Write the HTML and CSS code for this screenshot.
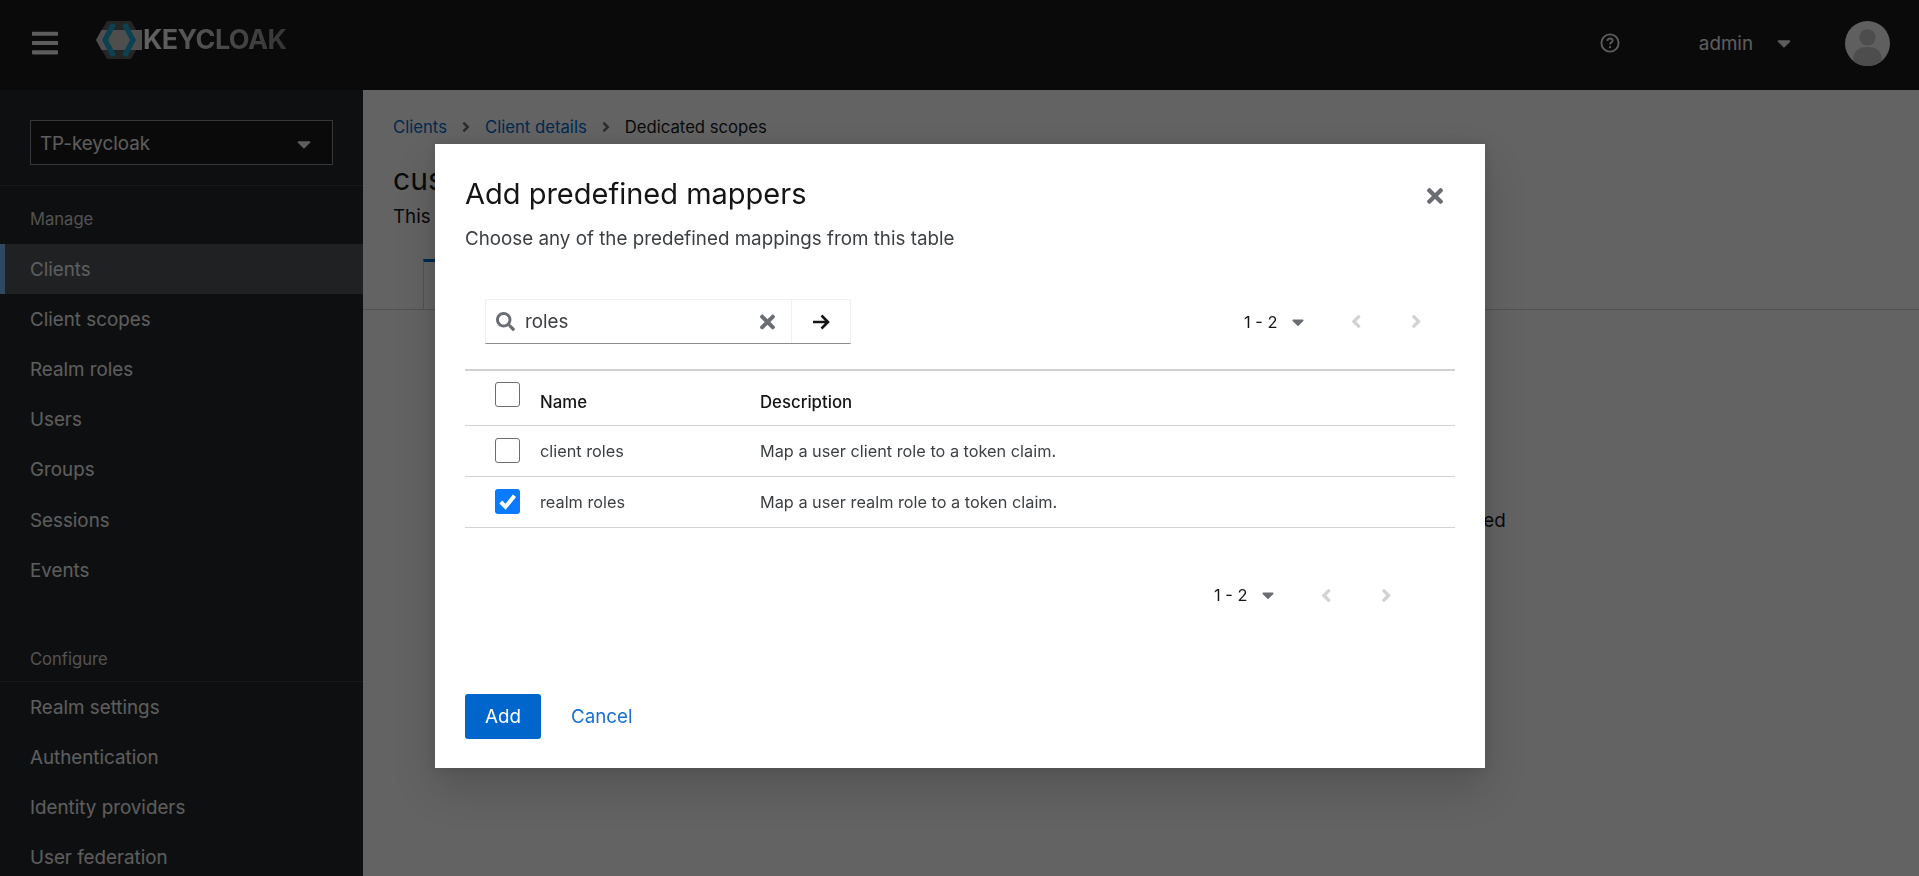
FILE: index.html
```html
<!DOCTYPE html>
<html lang="en">
<head>
    <meta charset="UTF-8">
    <meta name="viewport" content="width=device-width, initial-scale=1.0">
    <title>Keycloak Administration</title>
    <link rel="stylesheet" href="styles.css">
</head>
<body>
    <header class="topbar">
        <button class="menu-btn" aria-label="Menu">
            <svg class="menu-icon" viewBox="0 0 448 512"><path d="M16 132h416c8.837 0 16-7.163 16-16V76c0-8.837-7.163-16-16-16H16C7.163 60 0 67.163 0 76v40c0 8.837 7.163 16 16 16zm0 160h416c8.837 0 16-7.163 16-16v-40c0-8.837-7.163-16-16-16H16c-8.837 0-16 7.163-16 16v40c0 8.837 7.163 16 16 16zm0 160h416c8.837 0 16-7.163 16-16v-40c0-8.837-7.163-16-16-16H16c-8.837 0-16 7.163-16 16v40c0 8.837 7.163 16 16 16z"/></svg>
        </button>
        <div class="logo">
            <svg class="logo-mark" viewBox="0 0 46 38">
                <path d="M11 0H35L46 19 35 38H11L0 19Z" fill="#5c5c5c"/>
                <path d="M5.5 9H46V29H5.5L0 19Z" fill="#c8c8c8"/>
                <path d="M15 2 L20 4 L12 19 L20 34 L15 36 L6 19Z" fill="#1ba6cf"/>
                <path d="M31 2 L26 4 L34 19 L26 34 L31 36 L40 19Z" fill="#1ba6cf"/>
            </svg>
            <span class="logo-text">KEYCLOAK</span>
        </div>
        <div class="topbar-right">
            <svg class="help-icon" viewBox="0 0 20 20"><circle cx="10" cy="10" r="8.6" fill="none" stroke="#f0f0f0" stroke-width="1.9"/><path d="M7.4 8c0-1.6 1.1-2.5 2.6-2.5s2.6.9 2.6 2.2c0 1.9-2.6 1.9-2.6 3.8" fill="none" stroke="#f0f0f0" stroke-width="1.8"/><circle cx="10" cy="14.2" r="1.1" fill="#f0f0f0"/></svg>
            <div class="user-menu">
                <span>admin</span>
                <svg class="caret caret-user" viewBox="0 0 320 512"><path d="M31.3 192h257.3c17.8 0 26.7 21.5 14.1 34.1L174.1 354.8c-7.8 7.8-20.5 7.8-28.3 0L17.2 226.1C4.6 213.5 13.5 192 31.3 192z"/></svg>
            </div>
            <svg class="avatar" viewBox="0 0 44 44">
                <circle cx="22" cy="22" r="22" fill="#f5f5f5"/>
                <circle cx="22" cy="16" r="8" fill="#c4c4c4"/>
                <path d="M8 39c0-11 6-13.500 14-13.500S36 28 36 39c-4 3.500-9 5-14 5S12 42.500 8 39z" fill="#c4c4c4"/>
            </svg>
        </div>
    </header>

    <div class="layout">
        <nav class="sidebar">
            <div class="realm-box">
                <div class="realm-select">
                    <span>TP-keycloak</span>
                    <svg class="caret" viewBox="0 0 320 512"><path d="M31.3 192h257.3c17.8 0 26.7 21.5 14.1 34.1L174.1 354.8c-7.8 7.8-20.5 7.8-28.3 0L17.2 226.1C4.6 213.5 13.5 192 31.3 192z"/></svg>
                </div>
            </div>
            <div class="nav-title">Manage</div>
            <a class="nav-item active">Clients</a>
            <a class="nav-item">Client scopes</a>
            <a class="nav-item">Realm roles</a>
            <a class="nav-item">Users</a>
            <a class="nav-item">Groups</a>
            <a class="nav-item">Sessions</a>
            <a class="nav-item">Events</a>
            <div class="nav-title nav-title-line">Configure</div>
            <a class="nav-item">Realm settings</a>
            <a class="nav-item">Authentication</a>
            <a class="nav-item">Identity providers</a>
            <a class="nav-item">User federation</a>
        </nav>

        <main class="content">
            <div class="page-head">
                <div class="breadcrumb">
                    <a>Clients</a>
                    <svg class="crumb-sep" viewBox="0 0 256 512"><path d="M224.300 273l-136 136c-9.400 9.400-24.600 9.400-33.900 0l-22.600-22.600c-9.400-9.400-9.400-24.600 0-33.900l96.400-96.400-96.400-96.400c-9.400-9.400-9.400-24.600 0-33.900L54.300 103c9.400-9.400 24.600-9.400 33.900 0l136 136c9.500 9.400 9.500 24.600.1 34z"/></svg>
                    <a>Client details</a>
                    <svg class="crumb-sep" viewBox="0 0 256 512"><path d="M224.300 273l-136 136c-9.400 9.400-24.600 9.400-33.900 0l-22.600-22.600c-9.400-9.400-9.400-24.600 0-33.900l96.400-96.400-96.400-96.400c-9.400-9.400-9.400-24.600 0-33.900L54.300 103c9.400-9.400 24.600-9.400 33.900 0l136 136c9.500 9.400 9.500 24.600.1 34z"/></svg>
                    <span>Dedicated scopes</span>
                </div>
                <h1 class="page-title">cus</h1>
                <p class="page-sub">This</p>
            </div>
            <div class="tabs">
                <div class="tab tab-current">&nbsp;</div>
            </div>
            <div class="empty-state">
                <p>If you want to add mappers, please click the button below to add some predefined</p>
            </div>
        </main>
    </div>

    <!-- Modal sits over the whole page -->
    <div class="backdrop">
        <div class="modal">
            <div class="modal-head">
                <div>
                    <h2 class="modal-title">Add predefined mappers</h2>
                    <p class="modal-desc">Choose any of the predefined mappings from this table</p>
                </div>
                <svg class="close-icon" viewBox="0 0 352 512"><path d="M242.72 256l100.07-100.07c12.28-12.28 12.28-32.19 0-44.48l-22.24-22.24c-12.28-12.28-32.19-12.28-44.48 0L176 189.28 75.93 89.21c-12.28-12.28-32.19-12.28-44.48 0L9.21 111.45c-12.28 12.28-12.28 32.19 0 44.48L109.28 256 9.21 356.07c-12.28 12.28-12.28 32.19 0 44.48l22.24 22.24c12.28 12.28 32.2 12.28 44.48 0L176 322.72l100.07 100.07c12.28 12.28 32.2 12.28 44.48 0l22.24-22.24c12.28-12.28 12.28-32.19 0-44.48L242.72 256z"/></svg>
            </div>

            <div class="toolbar">
                <div class="search">
                    <div class="search-input">
                        <svg class="search-icon" viewBox="0 0 512 512"><path d="M505 442.7L405.3 343c-4.5-4.5-10.6-7-17-7H372c27.6-35.3 44-79.700 44-128C416 93.100 322.900 0 208 0S0 93.100 0 208s93.100 208 208 208c48.300 0 92.700-16.400 128-44v16.300c0 6.400 2.500 12.500 7 17l99.700 99.700c9.400 9.400 24.600 9.400 33.900 0l28.300-28.300c9.400-9.400 9.400-24.600.1-34zM208 336c-70.700 0-128-57.200-128-128 0-70.700 57.200-128 128-128 70.700 0 128 57.200 128 128 0 70.700-57.200 128-128 128z"/></svg>
                        <span class="search-text">roles</span>
                        <svg class="clear-icon" viewBox="0 0 352 512"><path d="M242.72 256l100.07-100.07c12.28-12.28 12.28-32.19 0-44.48l-22.24-22.24c-12.28-12.28-32.19-12.28-44.48 0L176 189.28 75.93 89.21c-12.28-12.28-32.19-12.28-44.48 0L9.21 111.45c-12.28 12.28-12.28 32.19 0 44.48L109.28 256 9.21 356.07c-12.28 12.28-12.28 32.19 0 44.48l22.24 22.24c12.28 12.28 32.2 12.28 44.48 0L176 322.72l100.07 100.07c12.28 12.28 32.2 12.28 44.48 0l22.24-22.24c12.28-12.28 12.28-32.19 0-44.48L242.72 256z"/></svg>
                    </div>
                    <div class="search-go">
                        <svg class="arrow-icon" viewBox="0 0 18 16"><path d="M1 8h15M9.500 1.500 16 8l-6.500 6.500" fill="none" stroke="#151515" stroke-width="2.600"/></svg>
                    </div>
                </div>
                <div class="pager">
                    <span class="pager-count">1 - 2</span>
                    <svg class="caret caret-dark" viewBox="0 0 320 512"><path d="M31.3 192h257.3c17.8 0 26.7 21.5 14.1 34.1L174.1 354.8c-7.8 7.8-20.5 7.8-28.3 0L17.2 226.1C4.6 213.5 13.5 192 31.3 192z"/></svg>
                    <svg class="angle angle-prev" viewBox="0 0 256 512"><path d="M31.7 239l136-136c9.4-9.4 24.6-9.4 33.9 0l22.6 22.6c9.4 9.4 9.4 24.6 0 33.9L127.900 256l96.400 96.400c9.400 9.400 9.400 24.600 0 33.900L201.700 409c-9.400 9.400-24.600 9.400-33.900 0l-136-136c-9.500-9.400-9.500-24.600-.1-34z"/></svg>
                    <svg class="angle angle-next" viewBox="0 0 256 512"><path d="M224.300 273l-136 136c-9.400 9.400-24.600 9.400-33.900 0l-22.600-22.600c-9.400-9.400-9.400-24.600 0-33.900l96.400-96.400-96.400-96.400c-9.400-9.400-9.400-24.600 0-33.900L54.300 103c9.400-9.400 24.600-9.400 33.900 0l136 136c9.500 9.400 9.500 24.600.1 34z"/></svg>
                </div>
            </div>

            <table class="mappers">
                <thead>
                    <tr>
                        <th class="col-check"><span class="check check-head"></span></th>
                        <th class="col-name">Name</th>
                        <th>Description</th>
                    </tr>
                </thead>
                <tbody>
                    <tr>
                        <td class="col-check"><span class="check"></span></td>
                        <td>client roles</td>
                        <td>Map a user client role to a token claim.</td>
                    </tr>
                    <tr>
                        <td class="col-check">
                            <span class="check check-on">
                                <svg viewBox="0 0 25 25"><path d="M5.800 13 10.500 17.800 19.500 6.800" fill="none" stroke="#fff" stroke-width="4"/></svg>
                            </span>
                        </td>
                        <td>realm roles</td>
                        <td>Map a user realm role to a token claim.</td>
                    </tr>
                </tbody>
            </table>

            <div class="pager pager-bottom">
                <span class="pager-count">1 - 2</span>
                <svg class="caret caret-dark" viewBox="0 0 320 512"><path d="M31.3 192h257.3c17.8 0 26.7 21.5 14.1 34.1L174.1 354.8c-7.8 7.8-20.5 7.8-28.3 0L17.2 226.1C4.6 213.5 13.5 192 31.3 192z"/></svg>
                <svg class="angle angle-prev" viewBox="0 0 256 512"><path d="M31.7 239l136-136c9.4-9.4 24.6-9.4 33.9 0l22.6 22.6c9.4 9.4 9.4 24.6 0 33.9L127.900 256l96.400 96.400c9.400 9.400 9.400 24.600 0 33.900L201.700 409c-9.400 9.400-24.600 9.400-33.900 0l-136-136c-9.500-9.400-9.500-24.600-.1-34z"/></svg>
                <svg class="angle angle-next" viewBox="0 0 256 512"><path d="M224.300 273l-136 136c-9.400 9.400-24.600 9.400-33.900 0l-22.600-22.600c-9.400-9.400-9.400-24.600 0-33.900l96.400-96.400-96.400-96.400c-9.400-9.400-9.400-24.600 0-33.900L54.300 103c9.400-9.400 24.600-9.400 33.900 0l136 136c9.500 9.400 9.500 24.600.1 34z"/></svg>
            </div>

            <div class="modal-foot">
                <button class="btn-add">Add</button>
                <a class="btn-cancel">Cancel</a>
            </div>
        </div>
    </div>
</body>
</html>
```

FILE: styles.css
```css
* {
    box-sizing: border-box;
}

body {
    margin: 0;
    height: 100vh;
    overflow: hidden;
    font-family: Inter, "Open Sans", sans-serif;
    font-size: 18.8px;
    color: #151515;
    background: #fff;
}

svg {
    display: block;
    flex: none;
}

/* Top bar */
.topbar {
    display: flex;
    align-items: center;
    height: 90px;
    padding: 0 29px 4px 32px;
    background: #151515;
    color: #f0f0f0;
}

.menu-btn {
    padding: 0;
    border: none;
    background: none;
}

.menu-icon {
    width: 26px;
    height: 30px;
    fill: #f0f0f0;
}

.logo {
    display: flex;
    align-items: center;
    margin-left: 38px;
    margin-bottom: 7px;
}

.logo-mark {
    width: 46px;
    height: 38px;
}

.logo-text {
    margin-left: 1px;
    font-size: 27px;
    font-weight: 700;
    letter-spacing: -0.6px;
    background: linear-gradient(90deg, #fff, #888);
    -webkit-background-clip: text;
    background-clip: text;
    color: transparent;
}

.topbar-right {
    display: flex;
    align-items: center;
    margin-left: auto;
}

.help-icon {
    width: 20px;
    height: 20px;
    margin-right: 79px;
}

.user-menu {
    display: flex;
    align-items: center;
}

.caret {
    width: 14px;
    height: 22px;
    fill: #f0f0f0;
}

.caret-user {
    margin-left: 24px;
}

.avatar {
    width: 45px;
    height: 45px;
    margin-left: 54px;
}

/* Sidebar and page behind the modal */
.layout {
    display: flex;
    height: calc(100vh - 90px);
}

.sidebar {
    flex: none;
    width: 363px;
    overflow: hidden;
    background: #212427;
    color: #f0f0f0;
}

.realm-box {
    padding: 30px 30px 20px;
    border-bottom: 1px solid #3c3f42;
}

.realm-select {
    display: flex;
    align-items: center;
    justify-content: space-between;
    height: 45px;
    padding: 2px 21px 0 9px;
    border: 1px solid #8a8d90;
    background: #151515;
}

.nav-title {
    display: flex;
    align-items: center;
    height: 58px;
    padding: 8px 30px 0;
    font-size: 16.6px;
    color: #d2d2d2;
}

.nav-title-line {
    height: 53px;
    margin-top: 34px;
    padding-top: 8px;
    border-bottom: 1px solid #3c3f42;
}

.nav-item {
    display: flex;
    align-items: center;
    height: 50.2px;
    padding: 0 30px;
}

.nav-item.active {
    background: #4f5255;
    border-left: 5px solid #73bcf7;
    padding-left: 25px;
}

.content {
    flex: 1;
    min-width: 0;
    display: flex;
    flex-direction: column;
}

.page-head {
    padding: 25px 30px 0;
}

.breadcrumb {
    display: flex;
    align-items: center;
    font-size: 16.7px;
    line-height: 24px;
}

.breadcrumb a {
    color: #06c;
}

.crumb-sep {
    width: 8px;
    height: 16px;
    margin: 0 15px;
    fill: #6a6e73;
}

.page-title {
    margin: 22px 0 0;
    font-size: 30px;
    font-weight: 400;
}

.page-sub {
    margin: 8px 0 0;
}

.tabs {
    display: flex;
    margin-top: 31px;
    padding-left: 60px;
    border-bottom: 1px solid #d2d2d2;
}

.tab {
    padding: 12px 20px;
}

.tab-current {
    width: 120px;
    border: 1px solid #d2d2d2;
    border-top: 3px solid #06c;
    border-bottom: none;
}

.empty-state {
    margin-top: 199px;
    text-align: center;
}

.empty-state p {
    margin: 0;
    white-space: nowrap;
}

/* Modal */
.backdrop {
    position: fixed;
    top: 0;
    left: 0;
    right: 0;
    bottom: 0;
    display: flex;
    align-items: flex-start;
    padding: 144px 0 0 435px;
    background: rgba(3, 3, 3, 0.62);
}

.modal {
    width: 1050px;
    height: 624px;
    display: flex;
    flex-direction: column;
    padding: 0 30px;
    background: #fff;
    box-shadow: 0 20px 40px rgba(3, 3, 3, 0.16), 0 0 10px rgba(3, 3, 3, 0.1);
}

.modal-head {
    display: flex;
    justify-content: space-between;
    align-items: flex-start;
    padding-top: 30px;
}

.modal-title {
    margin: 0;
    font-size: 29px;
    line-height: 40px;
    font-weight: 400;
    color: #151515;
}

.modal-desc {
    margin: 12px 0 0;
    line-height: 26px;
    color: #3c3f42;
}

.close-icon {
    width: 16px;
    height: 24px;
    margin: 10px 12px 0 0;
    fill: #6a6e73;
}

.toolbar {
    display: flex;
    align-items: center;
    justify-content: space-between;
    margin-top: 47px;
    padding-left: 20px;
}

.search {
    display: flex;
    width: 366px;
    height: 45px;
    border: 1px solid #f0f0f0;
    border-bottom: 1px solid #8a8d90;
}

.search-input {
    flex: 1;
    display: flex;
    align-items: center;
    padding: 0 16px 0 10px;
    border-right: 1px solid #f0f0f0;
}

.search-icon {
    width: 19px;
    height: 19px;
    fill: #6a6e73;
}

.search-text {
    flex: 1;
    margin-left: 10px;
    color: #3c3f42;
}

.clear-icon {
    width: 15px;
    height: 22px;
    fill: #6a6e73;
}

.search-go {
    width: 58px;
    display: flex;
    align-items: center;
    justify-content: center;
}

.arrow-icon {
    width: 18px;
    height: 16px;
}

.pager {
    display: flex;
    align-items: center;
    padding-right: 34px;
}

.pager-count {
    font-size: 16.4px;
    color: #151515;
    white-space: pre;
}

.caret-dark {
    width: 12px;
    height: 20px;
    margin-left: 14px;
    fill: #6a6e73;
}

.angle {
    width: 10.5px;
    height: 21px;
    fill: #d2d2d2;
}

.angle-prev {
    margin-left: 47px;
}

.angle-next {
    margin-left: 49.5px;
}

.pager-bottom {
    justify-content: flex-end;
    margin-top: 57px;
    padding-right: 64px;
}

.mappers {
    width: 100%;
    margin-top: 25px;
    border-collapse: collapse;
    table-layout: fixed;
    border-top: 2px solid #d2d2d2;
    color: #3c3f42;
}

.mappers th {
    height: 55px;
    padding: 8px 0 0;
    text-align: left;
    font-size: 16.8px;
    font-weight: 500;
    color: #151515;
    border-bottom: 1px solid #d2d2d2;
}

.mappers td {
    height: 51px;
    padding: 0;
    font-size: 16.3px;
    border-bottom: 1px solid #d2d2d2;
}

.mappers .col-check {
    width: 75px;
    padding: 0 0 0 30px;
}

.mappers th.col-check {
    vertical-align: top;
    padding-top: 11px;
}

.mappers .col-name {
    width: 220px;
}

.check {
    display: block;
    width: 25px;
    height: 25px;
    border: 1px solid #6a6e73;
    border-radius: 3px;
    background: #fff;
}

.check-on {
    border: none;
    background: #0a7aff;
}

.modal-foot {
    display: flex;
    align-items: center;
    margin-top: auto;
    padding-bottom: 29px;
}

.btn-add {
    width: 76px;
    height: 45px;
    padding: 0;
    border: none;
    border-radius: 3px;
    background: #06c;
    color: #fff;
    font: inherit;
}

.btn-cancel {
    margin-left: 30px;
    color: #1871cf;
}
```
